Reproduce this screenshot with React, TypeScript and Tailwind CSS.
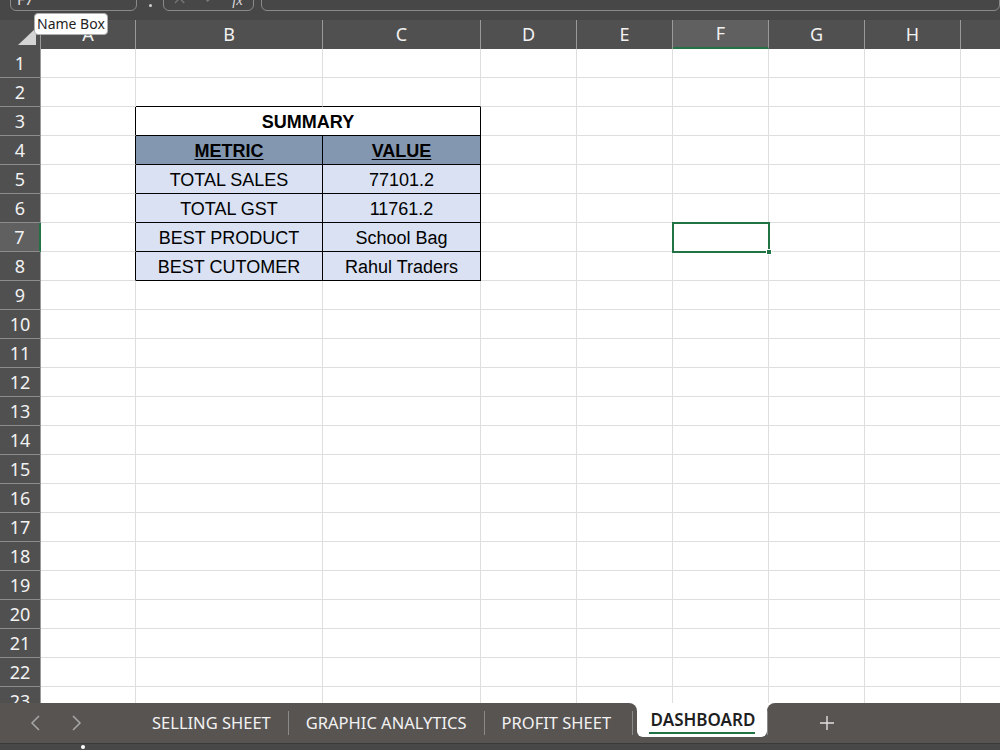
import React from "react";

const COLS = ["A", "B", "C", "D", "E", "F", "G", "H", "I"];
const ROWS = Array.from({ length: 23 }, (_, i) => i + 1);
const GRID = "grid grid-cols-[41px_95px_187px_158px_96px_96px_96px_96px_96px_96px]";
const UI_FONT = { fontFamily: '"Noto Sans", "Open Sans", sans-serif' };
const CELL_FONT = { fontFamily: '"Liberation Sans", Arial, sans-serif' };

const tableData: Record<number, [string, string]> = {
  5: ["TOTAL SALES", "77101.2"],
  6: ["TOTAL GST", "11761.2"],
  7: ["BEST PRODUCT", "School Bag"],
  8: ["BEST CUTOMER", "Rahul Traders"],
};

function Row({ r }: { r: number }) {
  const inTable = r >= 3 && r <= 8;
  const sel = r === 7;
  const cells: React.ReactNode[] = [];
  cells.push(
    <div
      key="h"
      className={`h-[29px] flex items-center justify-center text-[18px] text-[#f2f2f2] border-b border-[#8c8c8c] ${
        sel ? "bg-[#606060] border-r-2 border-r-[#217346]" : "bg-[#505050] border-r border-r-[#9a9a9a]"
      }`}
      style={UI_FONT}
    >
      {r}
    </div>
  );
  COLS.forEach((c) => {
    if (c === "C" && r === 3) return;
    let cls = "h-[29px] border-b border-r border-[#dedede] bg-white flex items-center justify-center text-[18px] text-black relative";
    let content: React.ReactNode = null;
    if (c === "A" && inTable) cls = cls.replace("border-r border-[#dedede]", "border-r border-r-black border-b-[#dedede]");
    if ((c === "B" || c === "C") && r === 2) cls = "h-[29px] border-b border-b-black border-r border-r-[#dedede] bg-white";
    if ((c === "B" || c === "C") && inTable) {
      let bg = "bg-[#d9e1f2]";
      if (r === 3) bg = "bg-white";
      if (r === 4) bg = "bg-[#8497b0]";
      cls = `h-[29px] border-b border-r border-black ${bg} flex items-center justify-center pt-[2px] text-[18px] text-black`;
      if (r === 3) {
        cls += " col-span-2 font-bold";
        content = "SUMMARY";
      } else if (r === 4) {
        cls += " font-bold underline underline-offset-2";
        content = c === "B" ? "METRIC" : "VALUE";
      } else {
        content = tableData[r][c === "B" ? 0 : 1];
      }
    }
    cells.push(
      <div key={c} className={cls} style={CELL_FONT}>
        {content}
        {c === "F" && r === 7 && (
          <div className="absolute z-10 -left-[1px] -top-[1px] w-[98px] h-[31px] border-2 border-[#217346]">
            <div className="absolute -right-[4px] -bottom-[4px] w-[6px] h-[6px] bg-[#217346] border border-white" />
          </div>
        )}
      </div>
    );
  });
  return <div className={GRID}>{cells}</div>;
}

export default function App() {
  return (
    <div className="w-[1000px] h-[750px] overflow-hidden flex flex-col bg-white relative">
      {/* top formula bar remnant */}
      <div className="h-[20px] bg-[#474747] flex items-start relative shrink-0" style={UI_FONT}>
        <div className="ml-[10px] w-[127px] h-[30px] -mt-[19px] border border-[#8a8a8a] rounded-md flex items-end justify-between px-[6px] pb-[4px] text-[#e0e0e0] text-[15px] leading-[15px]">
          <span className="-mb-[1px]">F7</span>
          <svg width="10" height="8" viewBox="0 0 10 8" className="mb-[5px]">
            <path d="M1 1 L5 5 L9 1" stroke="#d0d0d0" strokeWidth="1.4" fill="none" />
          </svg>
        </div>
        <div className="w-[26px] flex justify-center">
          <div className="w-[3px] h-[3px] rounded-full bg-[#d0d0d0] mt-[4px]" />
        </div>
        <div className="w-[91px] h-[30px] -mt-[19px] border border-[#8a8a8a] rounded-md flex items-end px-[10px] pb-[1px] gap-[16px] text-[#8a8a8a]">
          <svg width="14" height="12" viewBox="0 0 14 12"><path d="M1 -4 L11 6 M11 -4 L1 6" stroke="#7a7a7a" strokeWidth="1.3" /></svg>
          <svg width="14" height="12" viewBox="0 0 14 12"><path d="M1 0 L5 4 L13 -4" stroke="#7a7a7a" strokeWidth="1.3" fill="none" /></svg>
          <span className="italic text-[15px] leading-[15px] text-[#d8d8d8] mb-[1px]" style={{ fontFamily: '"Liberation Serif", serif' }}>fx</span>
        </div>
        <div className="ml-[7px] flex-1 h-[30px] -mt-[19px] border border-[#8a8a8a] rounded-md" />
      </div>

      {/* column header */}
      <div className={`${GRID} h-[29px] bg-[#505050] shrink-0`} style={UI_FONT}>
        <div className="relative border-r border-[#9a9a9a]">
          <svg width="20" height="18" viewBox="0 0 20 18" className="absolute right-[3px] bottom-[3px]">
            <polygon points="19,0 19,17 1,17" fill="#d4d4d4" />
          </svg>
        </div>
        {COLS.map((c) => (
          <div
            key={c}
            className={`flex items-center justify-center text-[18px] text-[#f2f2f2] border-r border-[#9a9a9a] ${
              c === "F" ? "bg-[#606060] border-b-2 border-b-[#217346]" : ""
            }`}
          >
            {c}
          </div>
        ))}
      </div>

      {/* grid */}
      <div className="flex-1 overflow-hidden">
        {ROWS.map((r) => (
          <Row key={r} r={r} />
        ))}
      </div>

      {/* sheet tabs */}
      <div className="h-[40px] flex bg-white shrink-0 text-[16.5px]" style={UI_FONT}>
        <div className="w-[637px] bg-[#585452] rounded-tr-[8px] flex items-center">
          <span className="w-[152px] shrink-0 pl-[29px] flex gap-[26px]">
            <svg width="14" height="18" viewBox="0 0 14 18" className="shrink-0"><path d="M10 2 L3 9 L10 16" stroke="#a8a8a8" strokeWidth="1.5" fill="none" /></svg>
            <svg width="14" height="18" viewBox="0 0 14 18" className="shrink-0"><path d="M4 2 L11 9 L4 16" stroke="#a8a8a8" strokeWidth="1.5" fill="none" /></svg>
          </span>
          <span className="text-[#f2f2f2]">SELLING SHEET</span>
          <span className="ml-[17px] w-px h-[24px] bg-[#8a8a8a]" />
          <span className="ml-[17px] text-[#f2f2f2]">GRAPHIC ANALYTICS</span>
          <span className="ml-[17px] w-px h-[24px] bg-[#8a8a8a]" />
          <span className="ml-[17px] text-[#f2f2f2]">PROFIT SHEET</span>
          <span className="ml-auto mr-[4px] w-px h-[24px] bg-[#8a8a8a]" />
        </div>
        <div className="w-[130px] bg-[#585452]">
          <div className="h-[34px] bg-white rounded-b-[6px] flex flex-col items-center justify-center">
            <span className="text-[#1f1f1f] font-semibold text-[17px] leading-[20px] mt-[3px] ml-[2px]">DASHBOARD</span>
            <span className="mt-[2px] w-[106px] h-[2px] bg-[#217346]" />
          </div>
        </div>
        <div className="flex-1 bg-[#585452] rounded-tl-[8px] flex items-center">
          <span className="w-px h-[24px] bg-[#8a8a8a]" />
          <svg width="16" height="16" viewBox="0 0 16 16" className="ml-[51px]">
            <path d="M8 1 V15 M1 8 H15" stroke="#e0e0e0" strokeWidth="1.4" />
          </svg>
        </div>
      </div>
      <div className="h-[7px] bg-[#484848] border-t border-[#3a3a3a] shrink-0 relative">
        <div className="absolute left-[81px] top-[1px] w-[4px] h-[4px] rounded-full bg-white" />
      </div>

      {/* Name Box tooltip */}
      <div
        className="absolute left-[34px] top-[13px] h-[22px] px-[2px] bg-white border border-[#b0b0b0] rounded-[4px] text-[14px] leading-[20px] text-[#1f1f1f]"
        style={UI_FONT}
      >
        Name Box
      </div>
    </div>
  );
}
